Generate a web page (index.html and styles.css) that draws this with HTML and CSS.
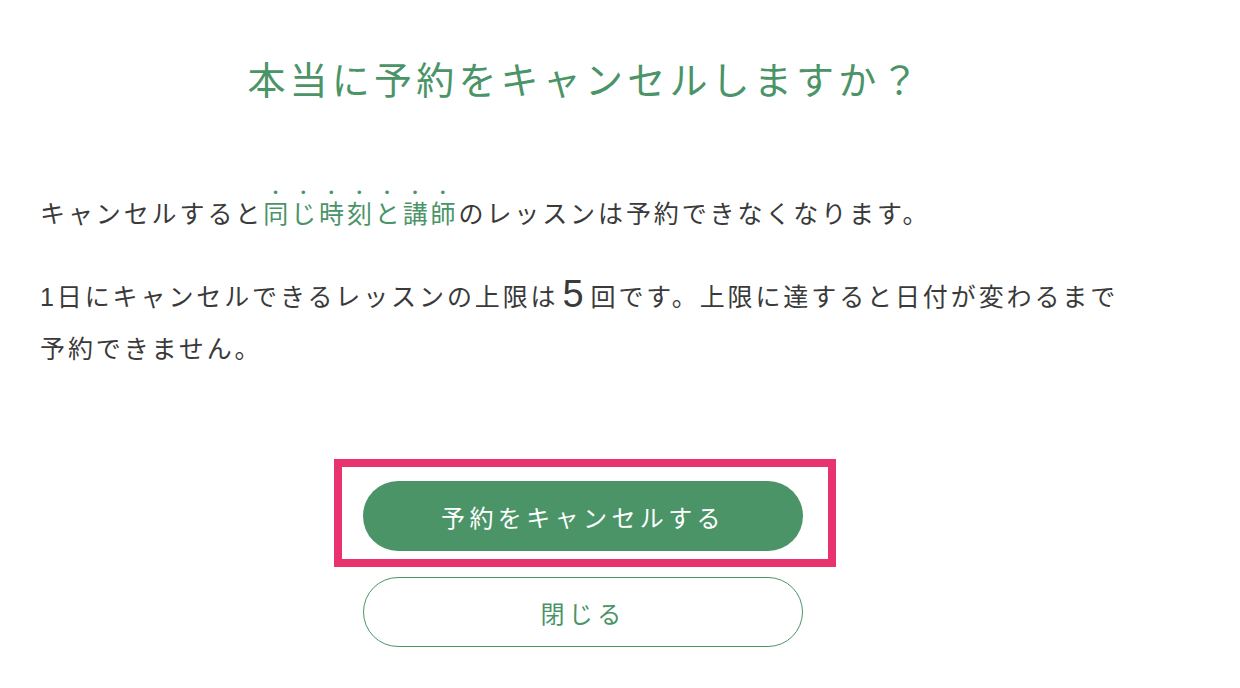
FILE: index.html
```html
<!DOCTYPE html>
<html lang="ja">

<head>
    <meta charset="UTF-8">
    <meta name="viewport" content="width=device-width, initial-scale=1.0">
    <title>予約キャンセル</title>
    <link rel="stylesheet" href="styles.css">
</head>

<body>
    <div class="dialog">
        <h2 class="dialog-title">本当に予約をキャンセルしますか？</h2>

        <p class="dialog-text">キャンセルすると<span class="emphasis">同じ時刻と講師</span>のレッスンは予約できなくなります。</p>
        <p class="dialog-text">1日にキャンセルできるレッスンの上限は<span class="count">5</span>回です。上限に達すると日付が変わるまで予約できません。</p>

        <div class="actions">
            <div class="highlight">
                <button type="button" class="btn btn-primary">予約をキャンセルする</button>
            </div>
            <button type="button" class="btn btn-secondary">閉じる</button>
        </div>
    </div>
</body>

</html>
```

FILE: styles.css
```css
body {
    margin: 0;
    background-color: #fff;
    font-family: "Liberation Sans", "Noto Sans CJK JP", sans-serif;
    color: #3a3a3a;
}

.dialog {
    width: 1080px;
    padding: 53px 40px 0;
}

.dialog-title {
    margin: 0 0 75px;
    padding-left: 10px;
    font-size: 38px;
    font-weight: normal;
    line-height: 57px;
    letter-spacing: 4.2px;
    text-align: center;
    color: #4a9468;
}

.dialog-text {
    margin: 0 0 31px;
    font-size: 25px;
    line-height: 52px;
    letter-spacing: 2.9px;
}

.emphasis {
    color: #4a9468;
    -webkit-text-emphasis: filled dot #4a9468;
    text-emphasis: filled dot #4a9468;
}

.count {
    font-size: 38px;
    padding: 0 4px;
    line-height: 30px;
    vertical-align: -1px;
}

.actions {
    display: flex;
    flex-direction: column;
    align-items: center;
    gap: 10px;
    padding-left: 6px;
    margin-top: 84px;
}

.highlight {
    margin-left: 4px;
    padding: 14px 25px 8px 21px;
    border: 8px solid #e8336f;
}

.btn {
    display: block;
    width: 440px;
    height: 70px;
    box-sizing: border-box;
    padding-left: 6px;
    border-radius: 35px;
    font-family: inherit;
    font-size: 24px;
    letter-spacing: 4.4px;
    cursor: pointer;
}

.btn-primary {
    background-color: #4a9468;
    border: none;
    color: #fff;
}

.btn-secondary {
    background-color: #fff;
    border: 1px solid #4a9468;
    color: #4a9468;
}
```
